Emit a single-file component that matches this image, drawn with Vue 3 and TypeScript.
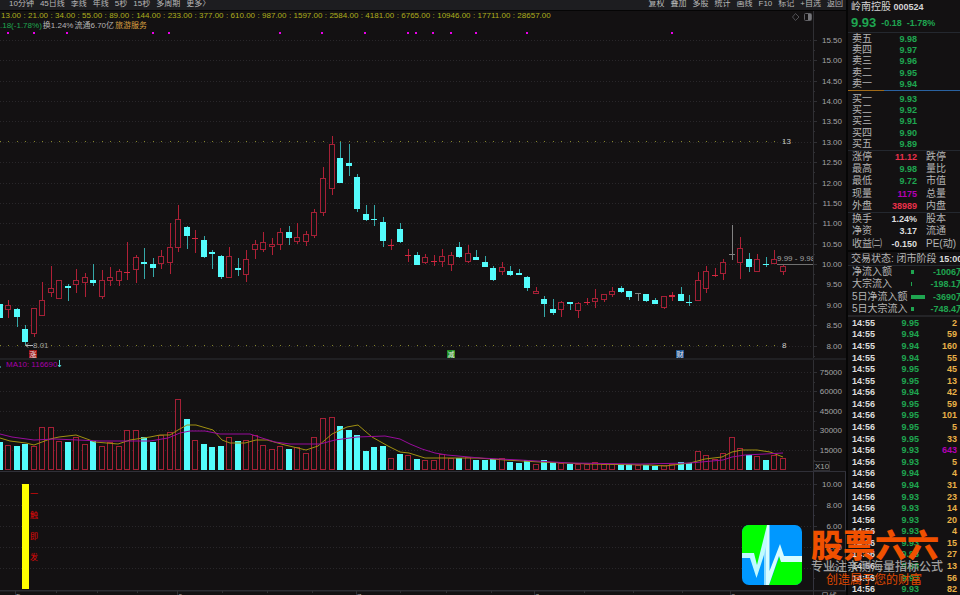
<script setup lang="ts">
type Kind = 'up' | 'down' | 'flat'
// kind, high, body top, body bottom, low, volume top
type Row = [Kind, number, number, number, number, number]

const rows: Row[] = [
  ['down', 304, 304, 318, 318, 442], ['up', 300, 305, 310, 318, 445], ['down', 308, 309, 317, 327, 446],
  ['down', 325, 329, 342, 345, 444], ['up', 308, 308, 334, 337, 446], ['up', 282, 300, 316, 316, 427],
  ['up', 266, 288, 293, 297, 427], ['up', 280, 280, 299, 299, 441], ['down', 284, 286, 288, 301, 442],
  ['up', 269, 280, 285, 293, 437], ['up', 273, 277, 283, 297, 444], ['down', 264, 280, 283, 286, 441],
  ['up', 270, 280, 297, 299, 446], ['up', 267, 277, 281, 286, 442], ['up', 269, 271, 281, 286, 446],
  ['up', 242, 272, 273, 280, 430], ['up', 255, 257, 270, 283, 430], ['down', 248, 262, 264, 279, 437],
  ['down', 258, 264, 268, 277, 442], ['up', 250, 256, 264, 269, 435], ['up', 223, 247, 263, 274, 432],
  ['up', 205, 219, 248, 252, 399], ['down', 226, 227, 236, 249, 419], ['up', 230, 238, 239, 253, 440],
  ['down', 236, 240, 257, 258, 444], ['down', 250, 252, 254, 269, 447], ['down', 255, 256, 277, 279, 446],
  ['up', 247, 256, 278, 278, 437], ['down', 258, 268, 270, 276, 441], ['up', 250, 259, 275, 282, 440],
  ['up', 240, 244, 250, 259, 435], ['up', 232, 242, 250, 252, 445], ['up', 238, 244, 247, 255, 449],
  ['up', 228, 232, 245, 250, 446], ['down', 226, 232, 238, 245, 449], ['up', 223, 237, 242, 244, 447],
  ['up', 231, 234, 242, 246, 453], ['up', 209, 212, 236, 238, 437], ['up', 167, 178, 213, 216, 418],
  ['up', 136, 144, 189, 195, 417], ['down', 142, 158, 183, 183, 426], ['down', 144, 163, 166, 176, 430],
  ['down', 174, 177, 209, 212, 435], ['down', 205, 214, 220, 221, 451], ['down', 205, 219, 220, 226, 447],
  ['down', 217, 222, 241, 247, 446], ['up', 239, 245, 246, 250, 458], ['down', 223, 229, 242, 243, 454],
  ['up', 249, 255, 256, 262, 455], ['down', 252, 255, 265, 265, 459], ['up', 254, 257, 263, 264, 460],
  ['up', 255, 261, 262, 266, 460], ['up', 249, 256, 262, 267, 454], ['up', 252, 255, 265, 271, 458],
  ['down', 242, 247, 257, 258, 458], ['up', 245, 253, 262, 263, 457], ['down', 250, 257, 260, 260, 460],
  ['down', 256, 262, 267, 267, 460], ['down', 266, 268, 280, 281, 459], ['up', 262, 267, 272, 275, 458],
  ['down', 266, 271, 275, 276, 462], ['down', 269, 273, 275, 275, 463], ['down', 276, 277, 288, 291, 460],
  ['up', 287, 291, 294, 294, 464], ['down', 296, 299, 304, 317, 460], ['down', 299, 309, 313, 315, 462],
  ['up', 301, 302, 310, 317, 463], ['down', 302, 302, 304, 310, 464], ['up', 302, 303, 311, 318, 464],
  ['up', 298, 302, 303, 305, 464], ['up', 289, 298, 302, 308, 462], ['up', 294, 294, 300, 302, 464],
  ['up', 287, 291, 295, 297, 464], ['down', 286, 288, 292, 293, 464], ['down', 291, 291, 297, 300, 464],
  ['flat', 293, 293, 294, 301, 465], ['down', 294, 294, 301, 302, 465], ['down', 298, 300, 304, 304, 466],
  ['up', 296, 296, 308, 309, 465], ['up', 292, 295, 297, 301, 464], ['down', 287, 294, 301, 301, 462],
  ['down', 295, 302, 303, 306, 463], ['up', 272, 280, 301, 301, 451], ['up', 266, 271, 289, 293, 455],
  ['up', 268, 275, 276, 277, 459], ['up', 259, 262, 274, 280, 453], ['flat', 225, 254, 255, 260, 437],
  ['up', 237, 248, 263, 279, 448], ['down', 253, 259, 267, 272, 455], ['up', 254, 259, 272, 272, 456],
  ['down', 257, 264, 265, 267, 460], ['up', 250, 259, 264, 264, 455], ['up', 265, 266, 272, 275, 458],
]
const bars = rows.map(([kind, high, top, bottom, low, vol], i) => ({
  x: Math.round(-0.5 + i * 8.513), kind, high, top, bottom, low, vol,
  hollow: kind === 'up' && bottom - top > 2,
}))

const prices = Array.from({ length: 16 }, (_, i) => ({
  label: (15.5 - i * 0.5).toFixed(2), y: Math.round(40 + i * 20.37),
}))
const volumes = [['75000', 372], ['60000', 391], ['45000', 411], ['30000', 430], ['15000', 450]] as const
const levels = [['10.00', 484], ['8.00', 505], ['6.00', 526], ['4.00', 547], ['2.00', 568]] as const
const dots = [7, 33, 66, 152, 168, 279, 321, 364, 407, 415, 432, 450, 475, 526, 671]
const signal = [['一', 494], ['触', 515], ['即', 536], ['发', 557]] as const
const tags = [['涨', 33, '#a01414'], ['减', 451, '#1c8c1c'], ['财', 680, '#1c5490']] as const
const months = [['5', 16], ['6', 178], ['7', 357], ['8', 535], ['9', 731]] as const
const monthTicks = [56, 97, 137, 222, 267, 312, 400, 446, 491, 584, 633, 682]

const maShort = '0,438 10,441 26,443 34,445 50,439 59,437 76,435 87,439 95,442 118,444 130,440 150,437 160,435 170,435 178,430 187,425 196,425 213,430 222,440 230,443 245,443 256,440 267,440 285,445 306,450 318,446 332,434 347,427 358,425 372,437 388,446 400,452 409,453 425,458 447,458 478,458 505,460 540,462 590,464 650,465 665,466 690,463 705,459 722,457 732,452 742,450 757,450 770,452 783,457'
const maLong = '0,434 12,437 34,440 55,439 100,441 150,441 168,438 180,433 190,431 205,431 220,434 250,434 262,438 275,442 290,444 320,444 335,440 357,437 385,436 400,439 410,444 422,449 435,453 447,455 480,458 520,460 570,463 640,464 690,463 712,461 723,460 732,457 745,455 765,454 783,453'

const periods = ['10分钟', '45日线', '季线', '年线', '5秒', '15秒', '多周期', '更多〉']
const tools = ['复权', '叠加', '多股', '统计', '画线', 'F10', '标记', '+自选', '返回']
const fib = ['13.00', '21.00', '34.00', '55.00', '89.00', '144.00', '233.00', '377.00', '610.00', '987.00', '1597.00', '2584.00', '4181.00', '6765.00', '10946.00', '17711.00', '28657.00']

const sells = [['卖五', '9.98'], ['卖四', '9.97'], ['卖三', '9.96'], ['卖二', '9.95'], ['卖一', '9.94']]
const buys = [['买一', '9.93'], ['买二', '9.92'], ['买三', '9.91'], ['买四', '9.90'], ['买五', '9.89']]
const stats = [
  ['涨停', '11.12', 'red', '跌停'], ['最高', '9.98', 'green', '量比'], ['最低', '9.72', 'green', '市值'],
  ['现量', '1175', 'purple', '总量'], ['外盘', '38989', 'red', '内盘'],
]
const basics = [['换手', '1.24%', 'white', '股本'], ['净资', '3.17', 'white', '流通'], ['收益㈡', '-0.150', 'white', 'PE(动)']]
const flows: [string, number, string][] = [
  ['净流入额', 3, '-1006万'], ['大宗流入', 1, '-198.1万'], ['5日净流入额', 14, '-3690万'], ['5日大宗流入', 3, '-748.4万'],
]
const ticks = [
  ['14:55', '9.95', '2'], ['14:55', '9.94', '59'], ['14:55', '9.94', '160'], ['14:55', '9.94', '55'],
  ['14:55', '9.95', '45'], ['14:55', '9.95', '13'], ['14:56', '9.94', '42'], ['14:56', '9.95', '59'],
  ['14:56', '9.95', '101'], ['14:56', '9.95', '5'], ['14:56', '9.95', '33'], ['14:56', '9.93', '643'],
  ['14:56', '9.93', '5'], ['14:56', '9.94', '4'], ['14:56', '9.94', '31'], ['14:56', '9.93', '23'],
  ['14:56', '9.93', '14'], ['14:56', '9.93', '20'], ['14:56', '9.93', '4'], ['14:56', '9.93', '15'],
  ['14:56', '9.93', '27'], ['14:56', '9.93', '13'], ['14:56', '9.93', '56'], ['14:56', '9.93', '82'],
]
</script>

<template>
  <div class="terminal">
    <main class="charts">
      <nav class="toolbar">
        <div class="group periods">
          <button v-for="p in periods" :key="p" type="button">{{ p }}</button>
        </div>
        <div class="group tools">
          <button v-for="t in tools" :key="t" type="button">{{ t }}</button>
        </div>
      </nav>

      <header class="info">
        <div class="info-text">
          <p class="fib">
            <template v-for="(f, i) in fib" :key="f"><i v-if="i > 0">:</i><span>{{ f }}</span></template>
          </p>
          <p class="quote">
            <span class="green">.18(-1.78%)</span><span>换1.24%</span><span>流通6.70亿</span><span class="gold">旅游服务</span>
          </p>
        </div>
        <svg class="corner" viewBox="0 0 20 10" aria-hidden="true">
          <path d="M3.500 1.500L7 5L3.500 8.500L0.500 5Z" fill="none" stroke="#505054" />
          <rect x="12.500" y="1.500" width="7" height="7" rx="1" fill="none" stroke="#606064" />
          <rect x="16" y="2" width="3" height="6" fill="#77777b" />
        </svg>
        <div class="axis-cap"></div>
      </header>

      <svg class="panel" viewBox="0 31 846 327">
        <g class="grid">
          <path v-for="p in prices" :key="p.label" :d="`M0 ${p.y + 0.5}H813`" />
        </g>
        <path class="axis" d="M813.500 31V358" />
        <g v-for="p in prices" :key="p.label">
          <path class="axis" :d="`M813 ${p.y + 0.5}h4M813 ${p.y + 10.5}h2`" />
          <text class="scale" x="842" :y="p.y + 3">{{ p.label }}</text>
        </g>
        <rect v-for="d in dots" :key="d" class="dot" :x="d" y="32" width="2" height="2" />
        <template v-for="b in bars" :key="b.x">
          <rect class="level" :x="b.x" y="141" width="1" height="1" />
          <rect class="level" :x="b.x" y="345" width="1" height="1" />
        </template>
        <g v-for="b in bars" :key="b.x" :class="b.kind">
          <rect class="wick" :x="b.x" :y="b.high" width="1" :height="b.top - b.high" />
          <rect class="wick" :x="b.x" :y="b.bottom" width="1" :height="b.low - b.bottom" />
          <rect v-if="b.hollow" class="hollow" :x="b.x - 2.5" :y="b.top + 0.5" width="5" :height="b.bottom - b.top - 1" />
          <rect v-else class="solid" :x="b.x - 3" :y="b.top" width="6" :height="b.bottom - b.top" />
        </g>
        <text class="note" x="782" y="144">13</text>
        <text class="note" x="782" y="348">8</text>
        <path class="pointer" d="M26 345.500H33M28 343.500L26 345.500L28 347.500" />
        <text class="price-note" x="33" y="348">8.01</text>
        <svg x="770" y="250" width="43" height="20"><text class="price-note" x="7" y="11">9.99 - 9.98</text></svg>
        <path class="last" d="M777 264.500H813" />
        <g v-for="t in tags" :key="t[0]">
          <rect :x="t[1] - 4" y="350" width="8" height="8" :fill="t[2]" />
          <text class="tag" :x="t[1]" y="357">{{ t[0] }}</text>
        </g>
      </svg>

      <svg class="panel volume" viewBox="0 360 846 111">
        <g v-for="v in volumes" :key="v[0]">
          <path class="gridline" :d="`M0 ${v[1] + 0.5}H813`" />
          <path class="axis" :d="`M813 ${v[1] + 0.5}h4M813 ${v[1] + 10.5}h2`" />
          <text class="scale" x="842" :y="v[1] + 3">{{ v[0] }}</text>
        </g>
        <path class="axis" d="M813.500 360V471" />
        <g v-for="b in bars" :key="b.x" :class="b.kind === 'flat' ? 'up' : b.kind">
          <rect v-if="b.kind !== 'down'" class="hollow" :x="b.x - 2.5" :y="b.vol + 0.5" width="5" :height="469 - b.vol" />
          <rect v-else class="solid" :x="b.x - 3" :y="b.vol" width="6" :height="470 - b.vol" />
        </g>
        <polyline :points="maShort" class="ma-short" />
        <polyline :points="maLong" class="ma-long" />
        <text class="ma-label" x="6" y="367">MA10: 116690</text>
        <path class="arrow" d="M59.500 360V367M58 365L59.500 367L61 365M0 366V368" />
        <rect class="unit-box" x="813.500" y="461.500" width="16" height="9" />
        <text class="unit" x="815" y="469">X10</text>
      </svg>

      <svg class="panel signal" viewBox="0 472 846 118">
        <g v-for="l in levels" :key="l[0]">
          <path class="gridline" :d="`M0 ${l[1] + 0.5}H813`" />
          <path class="axis" :d="`M813 ${l[1] + 0.5}h4M813 ${l[1] + 10.5}h2`" />
          <text class="scale" x="842" :y="l[1] + 3">{{ l[0] }}</text>
        </g>
        <path class="box" d="M813.500 472V590M845.500 472V590" />
        <rect x="22" y="484" width="7" height="105" fill="#ffff00" />
        <text v-for="s in signal" :key="s[0]" class="signal-text" x="34" :y="s[1] + 3">{{ s[0] }}</text>
      </svg>

      <svg class="panel months" viewBox="0 590 846 5">
        <path class="month-line" d="M0 590.500H846" />
        <g v-for="m in months" :key="m[0]">
          <path class="axis" :d="`M${m[1] - 0.5} 591V595`" />
          <text class="month" :x="m[1]" y="599">{{ m[0] }}</text>
        </g>
        <path v-for="m in monthTicks" :key="m" class="axis" :d="`M${m + 0.5} 591v2`" />
        <path class="axis" d="M813.500 591V595" />
        <text class="month" x="821" y="599">日线</text>
      </svg>
    </main>

    <aside class="side">
      <h1><span class="name">岭南控股</span> 000524</h1>
      <p class="latest green"><strong>9.93</strong><span>-0.18</span><span>-1.78%</span></p>
      <table class="book">
        <tbody>
          <tr v-for="r in sells" :key="r[0]"><th>{{ r[0] }}</th><td class="green">{{ r[1] }}</td></tr>
        </tbody>
      </table>
      <div class="ratio"><i></i><i></i></div>
      <table class="book">
        <tbody>
          <tr v-for="r in buys" :key="r[0]"><th>{{ r[0] }}</th><td class="green">{{ r[1] }}</td></tr>
        </tbody>
      </table>
      <table class="stats five">
        <tbody>
          <tr v-for="r in stats" :key="r[0]"><th>{{ r[0] }}</th><td :class="r[2]">{{ r[1] }}</td><th>{{ r[3] }}</th></tr>
        </tbody>
      </table>
      <table class="stats three">
        <tbody>
          <tr v-for="r in basics" :key="r[0]"><th>{{ r[0] }}</th><td :class="r[2]">{{ r[1] }}</td><th>{{ r[3] }}</th></tr>
        </tbody>
      </table>
      <p class="status">交易状态: 闭市阶段 <b>15:00</b></p>
      <table class="flows">
        <tbody>
          <tr v-for="f in flows" :key="f[0]">
            <th>{{ f[0] }}</th>
            <td><i :style="{ width: f[1] + 'px' }"></i></td>
            <td class="green">{{ f[2] }}</td>
          </tr>
        </tbody>
      </table>
      <table class="ticks">
        <tbody>
          <tr v-for="(t, i) in ticks" :key="i">
            <td class="white">{{ t[0] }}</td><td class="green">{{ t[1] }}</td>
            <td :class="t[2] === '643' ? 'purple' : 'amber'">{{ t[2] }}</td>
          </tr>
        </tbody>
      </table>
    </aside>

    <div class="brand">
      <svg viewBox="0 0 60 60" aria-hidden="true">
        <defs><clipPath id="badge"><rect width="60" height="60" rx="7" /></clipPath></defs>
        <g clip-path="url(#badge)">
          <rect width="60" height="60" fill="#0098ff" />
          <path d="M0 0H26L15 42L10 30H0Z" fill="#00ff00" />
          <path d="M27 60L38 30L43 36H60V60Z" fill="#00ff00" />
          <path d="M0 28H12L15 40L25 0H27V60H22V30L14.500 53L8 33H0Z" fill="#c0faff" />
          <path d="M25 0H27.500V46L38 19L42 31H60V37H39L37 31L27 60H22V33L25 20Z" fill="#d8fcff" />
          <path d="M22 30L24 22V60H22Z" fill="#90dcff" />
        </g>
      </svg>
      <div class="brand-text">
        <strong>股票六六</strong>
        <span class="claim">专业注亲测海量指标公式</span>
        <span class="slogan">创造属于您的财富</span>
      </div>
    </div>
  </div>
</template>

<style>
body {
  margin: 0;
  background: #131112;
}
</style>

<style scoped>
.terminal {
  position: relative;
  display: grid;
  grid-template-columns: minmax(0, 1fr) 114px;
  min-height: 100vh;
  overflow: hidden;
  background: #131112;
  color: #b4b4b4;
  font-family: "Liberation Sans", "Noto Sans CJK SC", sans-serif;
  font-size: 8px;
  line-height: 10px;
}
p, h1 { margin: 0; }
.green { color: #1fa550; }
.red { color: #e8304a; }
.purple { color: #b400b4; }
.white { color: #dcdcdc; }
.amber { color: #e8b048; }
.gold { color: #d8a040; }

.charts { min-width: 0; }
.toolbar {
  display: flex;
  justify-content: space-between;
  height: 10px;
  padding: 0 3px 0 0;
  overflow: hidden;
  background: #1d1d20;
  border-bottom: 1px solid #050505;
}
.group { display: flex; gap: 6px; }
.periods { padding-left: 9px; }
.toolbar button {
  padding: 0;
  border: 0;
  background: none;
  color: #b8b8b8;
  font: inherit;
  line-height: 8px;
  height: 8px;
  white-space: nowrap;
}
.info { display: flex; height: 20px; }
.info-text { flex: 1; white-space: nowrap; }
.fib { display: flex; padding-left: 1px; color: #aeae1c; }
.fib i { width: 7px; font-style: normal; text-align: center; }
.quote { display: flex; gap: 1px; }
.corner { width: 20px; height: 10px; margin: 1px 1px 0 0; }
.axis-cap { width: 32px; border-left: 1px solid #303034; }

.panel { display: block; width: 100%; height: auto; }
.volume { border-top: 2px solid #202023; }
.signal { border-top: 1px solid #303038; }
.grid path, .gridline { stroke: #29272a; stroke-dasharray: 1 2; fill: none; }
.axis { stroke: #303034; fill: none; }
.box { stroke: #34343e; fill: none; }
.month-line { stroke: #2c2c32; stroke-width: 2; }
.scale { fill: #a4a4a4; text-anchor: end; }
.dot { fill: #e800e8; }
.level { fill: #85852a; }
.up .wick { fill: #b02036; }
.up .solid { fill: #d42840; }
.up .hollow { fill: #131112; stroke: #a42036; }
.down .wick { fill: #35a8a8; }
.down .solid { fill: #54fcfc; }
.flat .wick, .flat .solid { fill: #828282; }
.note { fill: #c8c8c8; }
.price-note { fill: #a0a0a0; }
.pointer { stroke: #b8b8b8; fill: none; }
.last { stroke: #707070; }
.tag { fill: #f0e8e8; font-size: 7px; text-anchor: middle; }
.ma-short, .ma-long { fill: none; stroke-width: 1; }
.ma-short { stroke: #a09010; }
.ma-long { stroke: #980c9c; }
.ma-label { fill: #a800a8; }
.arrow { stroke: #54dcdc; fill: none; }
.unit-box { fill: #131112; stroke: #303034; }
.unit { fill: #a4a4a4; }
.signal-text { fill: #e00808; text-anchor: middle; }
.month { fill: #a4a4a4; }

.side {
  display: flex;
  flex-direction: column;
  min-width: 0;
  overflow: hidden;
  border-left: 2px solid #060606;
  color: #b4b4b4;
  font-size: 9px;
  white-space: nowrap;
}
.side h1 {
  height: 14px;
  padding-left: 3px;
  color: #d4d4d4;
  font-size: 9px;
  line-height: 13px;
}
.side .name { font-size: 10px; font-weight: 400; }
.latest {
  display: flex;
  align-items: center;
  gap: 5px;
  height: 18px;
  padding-left: 3px;
  border-bottom: 1px solid #24282f;
  font-weight: 700;
}
.latest strong { font-size: 13px; }
.side table { box-sizing: content-box; }
.side table, .side tbody { display: grid; }
.side tbody { grid-auto-rows: 1fr; }
.side tr { display: grid; align-items: center; padding-left: 4px; }
.side th { padding: 0; font-size: 10px; font-weight: 400; text-align: left; }
.side td { padding: 0; font-weight: 700; text-align: right; }
.book { height: 57px; }
.book tr { grid-template-columns: 20px 45px; }
.ratio { display: flex; padding-bottom: 2px; }
.ratio i { flex: 1; height: 1px; background: #2a62a0; }
.ratio i:first-child { flex: 0 0 36px; background: #a06a18; }
.stats { border-top: 1px solid #24282f; }
.five { height: 61px; }
.three { height: 37px; }
.stats tr { grid-template-columns: 20px 45px 34px; }
.stats th:last-child { padding-left: 9px; }
.status {
  height: 13px;
  padding-left: 3px;
  border-top: 2px solid #060606;
  border-bottom: 1px solid #24282f;
  font-size: 10px;
  line-height: 13px;
}
.status b { font-size: 9px; color: #dcdcdc; }
.flows { height: 49px; }
.flows tr { grid-template-columns: 59px 14px 40px; }
.flows i { display: block; height: 4px; background: #1fa550; }
.flows { border-bottom: 2px solid #242427; }
.ticks { flex: 1; }
.ticks tr { grid-template-columns: 23px 44px 38px; }

.brand {
  position: absolute;
  right: 17px;
  bottom: 8px;
  display: flex;
  gap: 9px;
}
.brand svg { width: 60px; height: 60px; }
.brand-text { display: flex; flex-direction: column; width: 132px; }
.brand strong {
  color: #f05000;
  font-family: "Noto Sans CJK SC", sans-serif;
  font-size: 32px;
  font-weight: 900;
  line-height: 36px;
}
.claim { color: #a0a0a0; font-size: 12px; font-weight: 500; line-height: 13px; }
.slogan { padding-left: 15px; color: #e04a00; font-size: 12px; line-height: 13px; }
</style>
